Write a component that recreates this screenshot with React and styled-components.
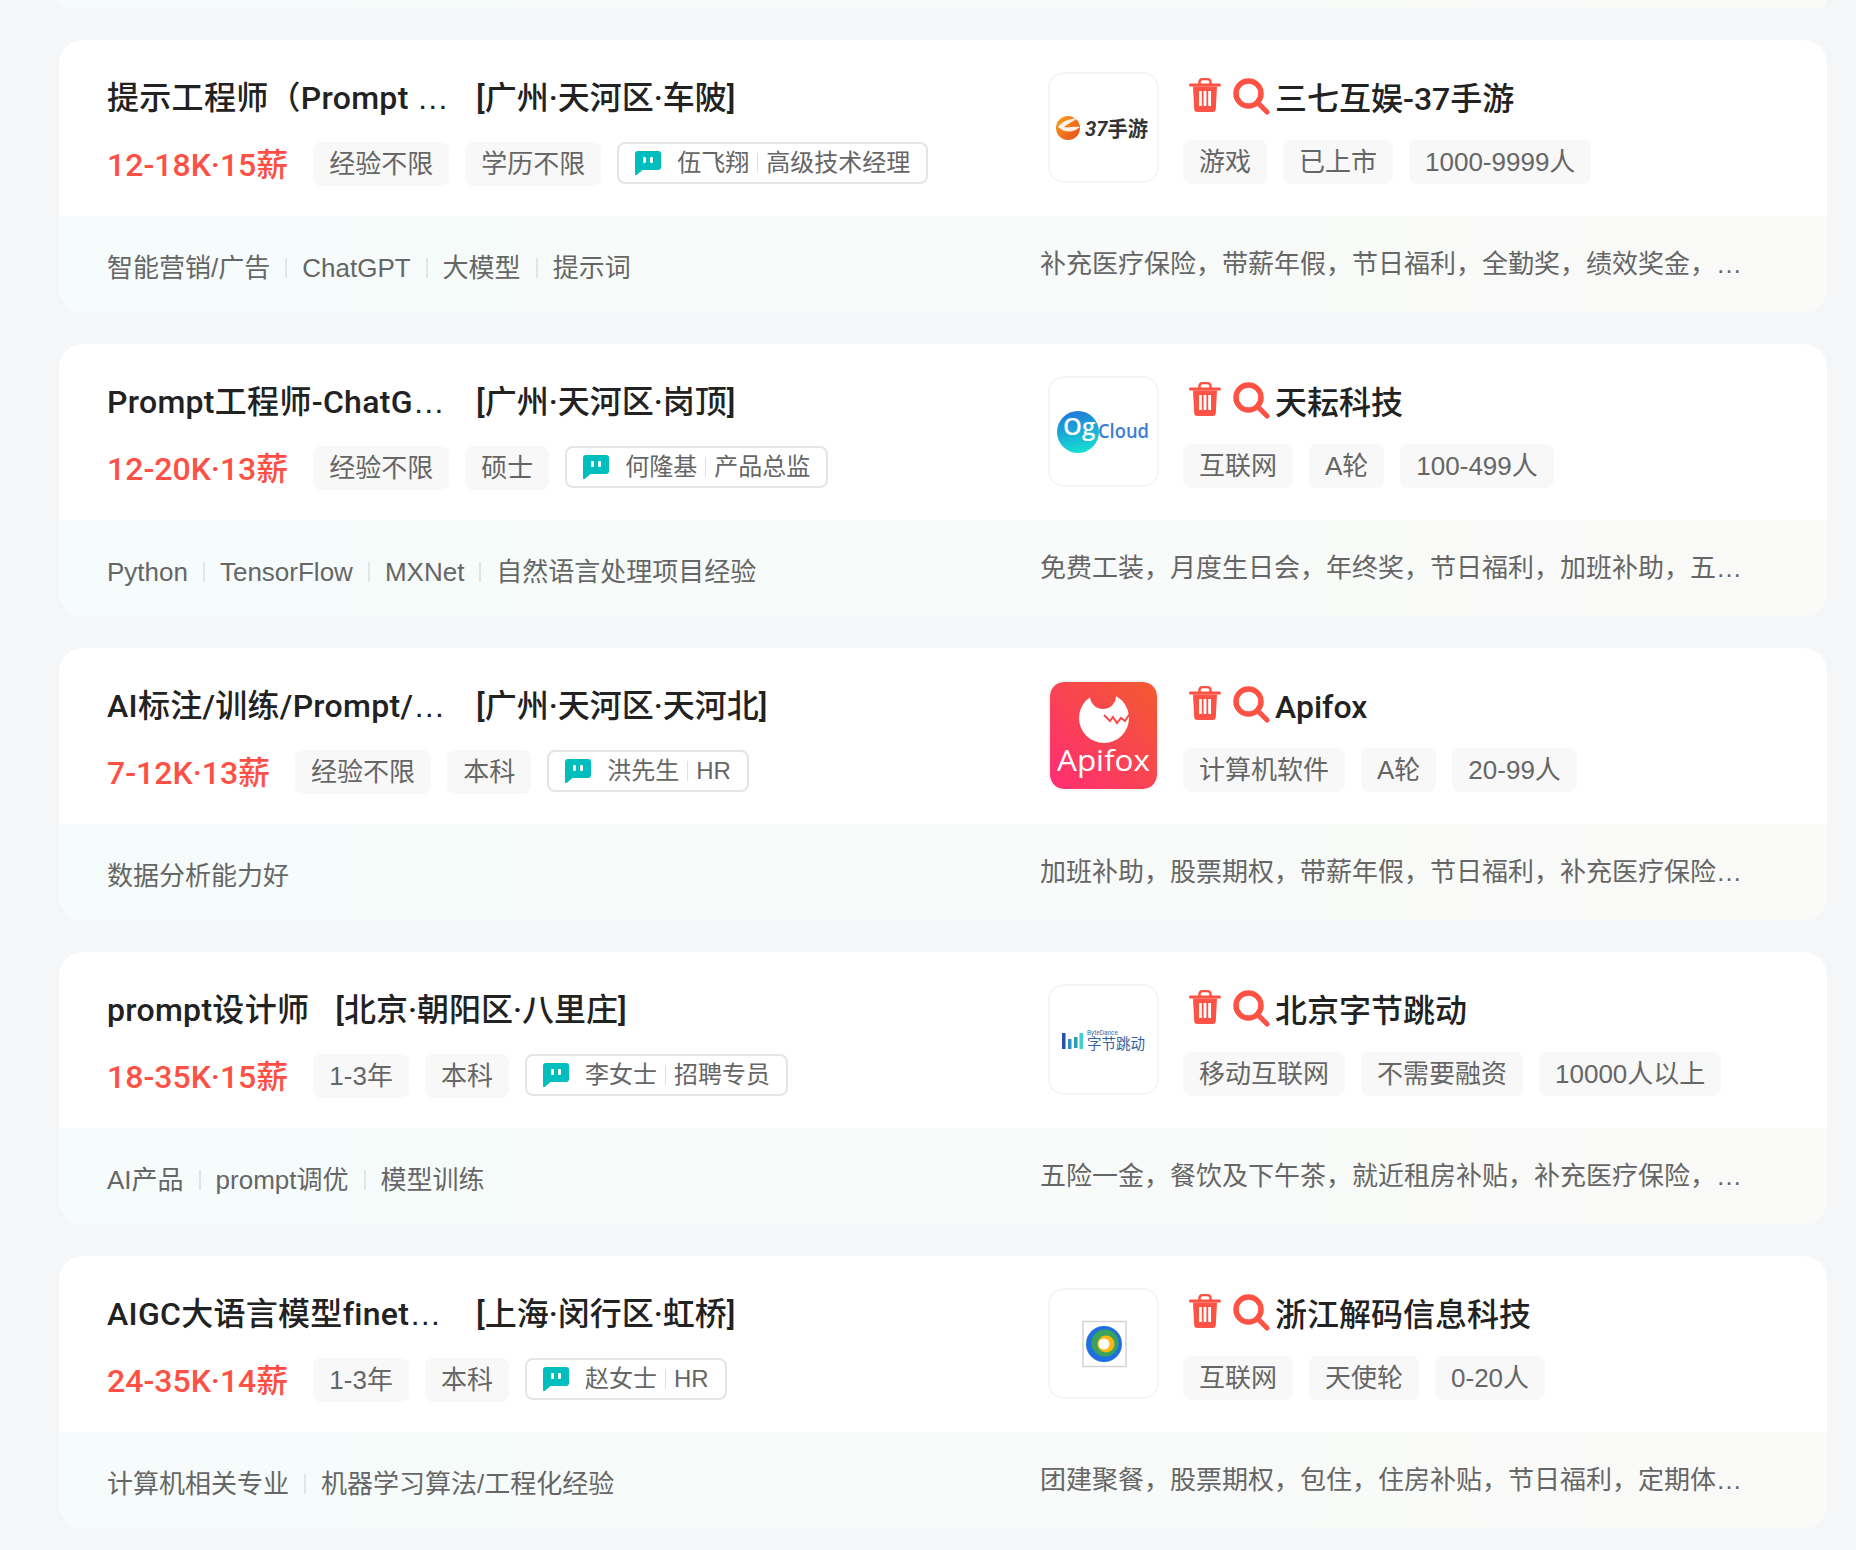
import React from "react";
import styled, { createGlobalStyle } from "styled-components";

const GlobalStyle = createGlobalStyle`
  html, body {
    margin: 0;
    background: #f5f6f8;
  }
  body {
    font-family: "Liberation Sans", "Noto Sans CJK SC", sans-serif;
  }
`;

const Page = styled.div`
  padding: 0 29px 22px 59px;
`;

const TopSliver = styled.div`
  height: 8px;
  margin-bottom: 32px;
  border-radius: 0 0 24px 24px;
  background: linear-gradient(90deg, #f5fcfb, #fafaf8);
`;

const List = styled.div`
  display: flex;
  flex-direction: column;
  gap: 32px;
`;

const Card = styled.div`
  background: #fff;
  border-radius: 24px;
  overflow: hidden;
`;

const Main = styled.div`
  height: 176px;
  display: flex;
`;

const JobCol = styled.div`
  width: 989px;
  box-sizing: border-box;
  padding: 32px 0 0 48px;
`;

const TitleRow = styled.div`
  display: flex;
  align-items: center;
  height: 46px;
  margin-bottom: 24px;
  font-family: Roboto, "Noto Sans CJK SC", sans-serif;
  font-size: 32px;
  font-weight: 500;
  color: #222;
`;

/* the dots of the ellipsis take this box's font, Liberation has the wide ones */
const JobName = styled.span`
  max-width: 343px;
  white-space: nowrap;
  overflow: hidden;
  text-overflow: ellipsis;
  margin-right: 26px;
  font-family: "Liberation Sans", "Noto Sans CJK SC", sans-serif;
  span {
    font-family: Roboto, "Noto Sans CJK SC", sans-serif;
    letter-spacing: 0.3px;
  }
`;

const Location = styled.span`
  white-space: nowrap;
`;

const InfoRow = styled.div`
  display: flex;
  align-items: flex-start;
  gap: 16px;
`;

const Salary = styled.span`
  font-family: Roboto, "Noto Sans CJK SC", sans-serif;
  font-size: 32px;
  font-weight: 500;
  line-height: 46px;
  color: #fe5044;
  margin-right: 9px;
`;

const Tag = styled.span`
  height: 44px;
  line-height: 44px;
  padding: 0 16px;
  border-radius: 8px;
  background: #f8f8f8;
  font-size: 26px;
  color: #666;
  white-space: nowrap;
`;

const Recruiter = styled.div`
  display: flex;
  align-items: center;
  height: 42px;
  box-sizing: border-box;
  padding: 0 16px;
  border: 2px solid #e5e5e5;
  border-radius: 8px;
  font-size: 24px;
  line-height: 36px;
  color: #666;
  white-space: nowrap;
`;

const ChatIcon = styled.svg`
  width: 26px;
  height: 24px;
  margin-right: 16px;
`;

const RecruiterDivider = styled.i`
  width: 1px;
  height: 20px;
  margin: 0 8px;
  background: #e0e0e0;
`;

const CompanyCol = styled.div`
  flex: 1;
  display: flex;
  padding-top: 32px;
`;

const LogoBox = styled.div`
  width: 111px;
  height: 111px;
  box-sizing: border-box;
  border: 2px solid #f5f5f5;
  border-radius: 16px;
  overflow: hidden;
  margin-right: 24px;
  flex-shrink: 0;
  svg {
    display: block;
    width: 100%;
    height: 100%;
  }
`;

const CompanyInfo = styled.div`
  display: flex;
  flex-direction: column;
`;

const NameRow = styled.div`
  display: flex;
  align-items: center;
  height: 44px;
  margin: 5px 0 19px 6px;
  font-family: Roboto, "Noto Sans CJK SC", sans-serif;
  font-size: 32px;
  font-weight: 500;
  line-height: 44px;
  color: #222;
`;

const TrashIcon = styled.svg`
  width: 32px;
  height: 34px;
  margin: -8px 12px 0 0;
`;

const SearchIcon = styled.svg`
  width: 37px;
  height: 37px;
  margin: -5px 5px 0 0;
`;

const CompanyTags = styled.div`
  display: flex;
  gap: 16px;
`;

const Footer = styled.div`
  height: 96px;
  display: flex;
  align-items: center;
  background: linear-gradient(90deg, #f5fcfb, #fafaf8);
  font-size: 26px;
  line-height: 36px;
  color: #666;
`;

const Skills = styled.div`
  width: 981px;
  box-sizing: border-box;
  padding: 8px 0 0 48px;
  display: flex;
  align-items: center;
`;

const SkillDivider = styled.i`
  width: 2px;
  height: 20px;
  margin: 0 15px;
  background: #e3e6e6;
`;

const Benefits = styled.div`
  width: 706px;
  margin-top: -1px;
  white-space: nowrap;
  overflow: hidden;
  text-overflow: ellipsis;
`;

function Chat() {
  return (
    <ChatIcon viewBox="0 0 26 24">
      <path
        d="M3 0H23a3 3 0 0 1 3 3V16a3 3 0 0 1-3 3H7.5L1.6 24C.7 24.600 0 24 0 23V3a3 3 0 0 1 3-3Z"
        fill="#00bebd"
      />
      <rect x="8" y="6" width="3" height="6" rx="1" fill="#fff" />
      <rect x="15" y="6" width="3" height="6" rx="1" fill="#fff" />
    </ChatIcon>
  );
}

function Trash() {
  return (
    <TrashIcon viewBox="0 0 32 34">
      <path d="M10.500 6V4a3 3 0 0 1 3-3h5a3 3 0 0 1 3 3v2" fill="none" stroke="#fe5245" strokeWidth="2.500" />
      <path d="M1.500 7h29" stroke="#fe5245" strokeWidth="3" strokeLinecap="round" />
      <path
        fillRule="evenodd"
        fill="#fe5245"
        d="M4 8.500H28L26.800 31a3 3 0 0 1-3 3H8.200a3 3 0 0 1-3-3ZM10 13v15h2.800V13ZM14.600 13v15h2.800V13ZM19.200 13v15H22V13Z"
      />
    </TrashIcon>
  );
}

function Search() {
  return (
    <SearchIcon viewBox="0 0 37 37">
      <circle cx="15.500" cy="15.500" r="12.500" fill="none" stroke="#fe5245" strokeWidth="5.500" />
      <path d="M25 25L34 34" stroke="#fe5245" strokeWidth="5" strokeLinecap="round" />
    </SearchIcon>
  );
}

function Logo37() {
  return (
    <svg viewBox="0 0 107 107">
      <defs>
        <linearGradient id="swirl37" x1="0" y1="0" x2="1" y2="1">
          <stop offset="0" stopColor="#f9a51a" />
          <stop offset="1" stopColor="#e8481c" />
        </linearGradient>
      </defs>
      <circle cx="18" cy="54" r="12" fill="url(#swirl37)" />
      <path d="M8 53c5-7 13-8 20-9-6 4-11 6-14 9 5 1 10-1 16 0-7 6-15 6-22 0Z" fill="#fff" opacity="0.9" />
      <text x="35" y="62" textLength="63" lengthAdjust="spacingAndGlyphs" fontFamily="Roboto, 'Noto Sans CJK SC', sans-serif" fontSize="21" fontWeight="700" fill="#333">
        <tspan fontStyle="italic">37</tspan>手游
      </text>
    </svg>
  );
}

function LogoOg() {
  return (
    <svg viewBox="0 0 107 107">
      <defs>
        <linearGradient id="ogBall" x1="0.300" y1="0" x2="0.500" y2="1">
          <stop offset="0" stopColor="#1f76d8" />
          <stop offset="1" stopColor="#16e0d2" />
        </linearGradient>
      </defs>
      <circle cx="28" cy="54" r="21" fill="url(#ogBall)" />
      <text x="13" y="57" fontFamily="'Open Sans', sans-serif" fontSize="24" fontWeight="600" fill="#fff">
        Og
      </text>
      <text x="48" y="60" textLength="51" lengthAdjust="spacingAndGlyphs" fontFamily="'Open Sans', sans-serif" fontSize="20" fontWeight="600" fill="#3a7fd5">
        Cloud
      </text>
    </svg>
  );
}

function LogoApifox() {
  return (
    <svg viewBox="0 0 107 107">
      <defs>
        <linearGradient id="apifoxBg" x1="0" y1="1" x2="1" y2="0">
          <stop offset="0" stopColor="#ff2d75" />
          <stop offset="1" stopColor="#f35a2f" />
        </linearGradient>
        <mask id="apifoxHead">
          <rect width="107" height="107" fill="#fff" />
          <circle cx="53" cy="14" r="13" fill="#000" />
          <path d="M54 33l6 6 3-4 4 6 4-5 4 3 6-9" fill="none" stroke="#000" strokeWidth="2" />
        </mask>
      </defs>
      <rect width="107" height="107" rx="14" fill="url(#apifoxBg)" />
      <circle cx="54" cy="36" r="25" fill="#fff" mask="url(#apifoxHead)" />
      <text x="53.500" y="89" textAnchor="middle" textLength="93" lengthAdjust="spacingAndGlyphs" fontFamily="'Open Sans', sans-serif" fontSize="30" fill="#fff">
        Apifox
      </text>
    </svg>
  );
}

function LogoByte() {
  return (
    <svg viewBox="0 0 107 107">
      <rect x="12" y="47" width="3.500" height="16" fill="#2b4fa8" />
      <rect x="18" y="53" width="3.500" height="10" fill="#2f8fc0" />
      <rect x="24" y="51" width="3.500" height="11" fill="#2a9db5" />
      <rect x="29.500" y="47" width="3.500" height="16" fill="#3fd0c9" />
      <text x="37" y="49" fontFamily="Roboto, sans-serif" fontSize="6.500" fill="#3a6ea8">
        ByteDance
      </text>
      <text x="37" y="63" fontFamily="'Noto Sans CJK SC', sans-serif" fontSize="14.500" fill="#34639e">
        字节跳动
      </text>
    </svg>
  );
}

function LogoRing() {
  return (
    <svg viewBox="0 0 107 107">
      <rect x="33" y="31.500" width="43" height="45" fill="#fff" stroke="#d4d4d4" strokeWidth="1.500" />
      <circle cx="54" cy="54" r="18" fill="#1f6fe0" />
      <circle cx="55" cy="53" r="13.500" fill="#3aa35a" />
      <circle cx="56" cy="54" r="8.500" fill="#fbb612" />
      <circle cx="54" cy="54" r="5.500" fill="#fff" />
    </svg>
  );
}

const jobs = [
  {
    title: "提示工程师（Prompt Engineer）",
    location: "[广州·天河区·车陂]",
    salary: "12-18K·15薪",
    tags: ["经验不限", "学历不限"],
    boss: "伍飞翔",
    role: "高级技术经理",
    Logo: Logo37,
    company: "三七互娱-37手游",
    companyTags: ["游戏", "已上市", "1000-9999人"],
    skills: ["智能营销/广告", "ChatGPT", "大模型", "提示词"],
    benefits: "补充医疗保险，带薪年假，节日福利，全勤奖，绩效奖金，定期体检",
  },
  {
    title: "Prompt工程师-ChatGPT方向",
    location: "[广州·天河区·岗顶]",
    salary: "12-20K·13薪",
    tags: ["经验不限", "硕士"],
    boss: "何隆基",
    role: "产品总监",
    Logo: LogoOg,
    company: "天耘科技",
    companyTags: ["互联网", "A轮", "100-499人"],
    skills: ["Python", "TensorFlow", "MXNet", "自然语言处理项目经验"],
    benefits: "免费工装，月度生日会，年终奖，节日福利，加班补助，五险一金",
  },
  {
    title: "AI标注/训练/Prompt/算法工程师",
    location: "[广州·天河区·天河北]",
    salary: "7-12K·13薪",
    tags: ["经验不限", "本科"],
    boss: "洪先生",
    role: "HR",
    Logo: LogoApifox,
    company: "Apifox",
    companyTags: ["计算机软件", "A轮", "20-99人"],
    skills: ["数据分析能力好"],
    benefits: "加班补助，股票期权，带薪年假，节日福利，补充医疗保险，五险一金",
  },
  {
    title: "prompt设计师",
    location: "[北京·朝阳区·八里庄]",
    salary: "18-35K·15薪",
    tags: ["1-3年", "本科"],
    boss: "李女士",
    role: "招聘专员",
    Logo: LogoByte,
    company: "北京字节跳动",
    companyTags: ["移动互联网", "不需要融资", "10000人以上"],
    skills: ["AI产品", "prompt调优", "模型训练"],
    benefits: "五险一金，餐饮及下午茶，就近租房补贴，补充医疗保险，定期体检",
  },
  {
    title: "AIGC大语言模型finetune工程师",
    location: "[上海·闵行区·虹桥]",
    salary: "24-35K·14薪",
    tags: ["1-3年", "本科"],
    boss: "赵女士",
    role: "HR",
    Logo: LogoRing,
    company: "浙江解码信息科技",
    companyTags: ["互联网", "天使轮", "0-20人"],
    skills: ["计算机相关专业", "机器学习算法/工程化经验"],
    benefits: "团建聚餐，股票期权，包住，住房补贴，节日福利，定期体检，五险一金",
  },
];

function JobCard({ job }) {
  const { Logo } = job;
  return (
    <Card>
      <Main>
        <JobCol>
          <TitleRow>
            <JobName>
              <span>{job.title}</span>
            </JobName>
            <Location>{job.location}</Location>
          </TitleRow>
          <InfoRow>
            <Salary>{job.salary}</Salary>
            {job.tags.map((tag) => (
              <Tag key={tag}>{tag}</Tag>
            ))}
            <Recruiter>
              <Chat />
              {job.boss}
              <RecruiterDivider />
              {job.role}
            </Recruiter>
          </InfoRow>
        </JobCol>
        <CompanyCol>
          <LogoBox>
            <Logo />
          </LogoBox>
          <CompanyInfo>
            <NameRow>
              <Trash />
              <Search />
              {job.company}
            </NameRow>
            <CompanyTags>
              {job.companyTags.map((tag) => (
                <Tag key={tag}>{tag}</Tag>
              ))}
            </CompanyTags>
          </CompanyInfo>
        </CompanyCol>
      </Main>
      <Footer>
        <Skills>
          {job.skills.map((skill, i) => (
            <React.Fragment key={skill}>
              {i > 0 && <SkillDivider />}
              <span>{skill}</span>
            </React.Fragment>
          ))}
        </Skills>
        <Benefits>{job.benefits}</Benefits>
      </Footer>
    </Card>
  );
}

export default function App() {
  return (
    <Page>
      <GlobalStyle />
      <TopSliver />
      <List>
        {jobs.map((job) => (
          <JobCard key={job.company} job={job} />
        ))}
      </List>
    </Page>
  );
}
